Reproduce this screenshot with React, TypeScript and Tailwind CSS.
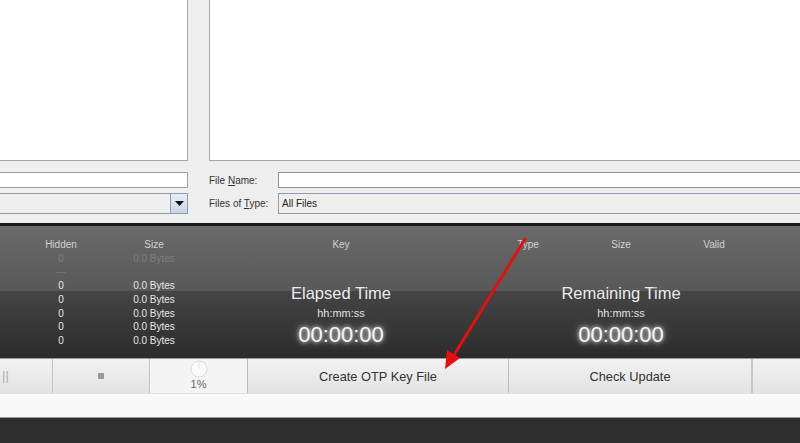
import React from "react";

// file chooser + OTP key generator status panel

const sans = "font-['Liberation_Sans',Arial,sans-serif]";

const cols = [
  { label: "Hidden", w: "w-[80px]", ml: "ml-[21px]" },
  { label: "Size", w: "w-[100px]", ml: "ml-[3px]" },
  { label: "Key", w: "w-[200px]", ml: "ml-[37px]" },
  { label: "Type", w: "w-[80px]", ml: "ml-[47px]" },
  { label: "Size", w: "w-[100px]", ml: "ml-[3px]" },
  { label: "Valid", w: "w-[80px]", ml: "ml-[3px]" },
];

const rows = [
  { hidden: "0", size: "0.0 Bytes", faint: true },
  { hidden: "—", size: "", faint: true },
  { hidden: "0", size: "0.0 Bytes" },
  { hidden: "0", size: "0.0 Bytes" },
  { hidden: "0", size: "0.0 Bytes" },
  { hidden: "0", size: "0.0 Bytes" },
  { hidden: "0", size: "0.0 Bytes" },
];

const TimeBlock = ({ title }: { title: string }) => (
  <div className="flex flex-col items-center w-[200px] text-[#ececec]">
    <div className="text-[16.5px] leading-[20px]">{title}</div>
    <div className="text-[11px] leading-[14px] mt-[3px] text-[#e0e0e0]">hh:mm:ss</div>
    <div className="text-[22px] leading-[25px] mt-[2px] text-[#f4f4f4] [text-shadow:0_0_4px_rgba(255,255,255,0.9),0_0_8px_rgba(255,255,255,0.5)]">
      00:00:00
    </div>
  </div>
);

export default function App() {
  return (
    <div className={`relative w-[800px] h-[443px] overflow-hidden flex flex-col bg-[#2d2d2d] ${sans}`}>
      {/* file chooser area */}
      <div className="h-[223px] bg-[#eeeeee] flex">
        <div className="w-[188px] flex flex-col">
          <div className="h-[161px] bg-white border-r border-b border-[#a8a8a8]" />
          <div className="mt-[11px] h-[16px] bg-white border border-l-0 border-[#a2a2a2]" />
          <div className="mt-[5px] h-[21px] flex border-y border-[#8c9db3] bg-[#efefef]">
            <div className="flex-1" />
            <div className="w-[18px] border-l border-r border-[#8c9db3] bg-[linear-gradient(to_bottom,#e9eff7,#c7d5e6)] flex items-center justify-center">
              <svg width="9" height="5" viewBox="0 0 9 5">
                <path d="M0 0h9L4.5 5z" fill="#111" />
              </svg>
            </div>
          </div>
        </div>
        <div className="ml-[21px] flex-1 flex flex-col">
          <div className="h-[161px] bg-white border-l border-b border-[#a8a8a8]" />
          <div className="mt-[11px] flex items-center h-[16px]">
            <div className="w-[69px] text-[10px] text-[#333]">
              File <span className="underline">N</span>ame:
            </div>
            <div className="flex-1 h-full bg-white border border-r-0 border-[#8f8f8f]" />
          </div>
          <div className="mt-[5px] flex items-center h-[21px]">
            <div className="w-[69px] text-[10px] text-[#333]">
              Files of <span className="underline">T</span>ype:
            </div>
            <div className="flex-1 h-full bg-[#f0eded] border border-r-0 border-[#8c9db3] flex items-center pl-[3px] text-[10px] text-[#222]">
              All Files
            </div>
          </div>
        </div>
      </div>

      {/* status panel */}
      <div className="h-[135px] border-t-[3px] border-[#1a1a1a] bg-[linear-gradient(to_bottom,#6a6a6a_0%,#585858_49%,#454545_49%,#2b2b2b_100%)] flex flex-col">
        <div className="flex mt-[12px] h-[12px] items-center text-[10px] text-[#d2d2d2]">
          {cols.map((c, i) => (
            <div key={i} className={`${c.w} ${c.ml} text-center`}>
              {c.label}
            </div>
          ))}
        </div>
        <div className="flex mt-[1px]">
          <div className="flex flex-col text-[10px] leading-[13.75px] pt-[0.5px] text-[#e6e6e6]">
            {rows.map((r, i) => (
              <div key={i} className={`flex ${r.faint ? "opacity-20" : ""}`}>
                <div className="w-[80px] ml-[21px] text-center">{r.hidden}</div>
                <div className="w-[100px] ml-[3px] text-center">{r.size}</div>
              </div>
            ))}
          </div>
          <div className="ml-[37px] mt-[32px]">
            <TimeBlock title="Elapsed Time" />
          </div>
          <div className="ml-[80px] mt-[32px]">
            <TimeBlock title="Remaining Time" />
          </div>
        </div>
      </div>

      {/* action buttons */}
      <div className="h-[35px] flex border-t border-[#9a9a9a] bg-[linear-gradient(to_bottom,#f2f2f2,#e3e3e3)] text-[12.8px] text-[#333]">
        <div className="w-[53px] border-r border-[#c4c4c4] flex items-center pl-[2px] text-[#b0b0b0] text-[13px]">
          ||
        </div>
        <div className="w-[97px] border-r border-[#c4c4c4] flex items-center justify-center">
          <div className="w-[6px] h-[6px] bg-[#9a9a9a]" />
        </div>
        <div className="w-[97px] bg-[#f4f4f4] flex flex-col items-center">
          <svg width="18" height="18" viewBox="0 0 18 18" className="mt-[1px]">
            <circle cx="9" cy="9" r="8" fill="#fafafa" stroke="#dddddd" />
            <path d="M9 1v8" stroke="#e4e4e4" />
          </svg>
          <div className="text-[11px] leading-[12px] text-[#666]">1%</div>
        </div>
        <div className="w-[262px] border-x border-[#bdbdbd] flex items-center justify-center pt-[1px]">
          Create OTP Key File
        </div>
        <div className="w-[244px] border-r-2 border-[#c6c6c6] flex items-center justify-center pt-[1px]">
          Check Update
        </div>
        <div className="flex-1" />
      </div>
      <div className="h-[25px] bg-[#f9f9f9] border-t border-[#e2e2e2] border-b border-b-[#9a9a9a]" />
      <div className="flex-1 bg-[#2d2d2d]" />

      {/* annotation arrow */}
      <svg className="absolute left-0 top-0 pointer-events-none" width="800" height="443">
        <line x1="525" y1="239" x2="454" y2="355" stroke="#e3100f" strokeWidth="3" strokeLinecap="round" />
        <path d="M445 369 L447 350 L460 358 Z" fill="#e3100f" />
      </svg>
    </div>
  );
}
